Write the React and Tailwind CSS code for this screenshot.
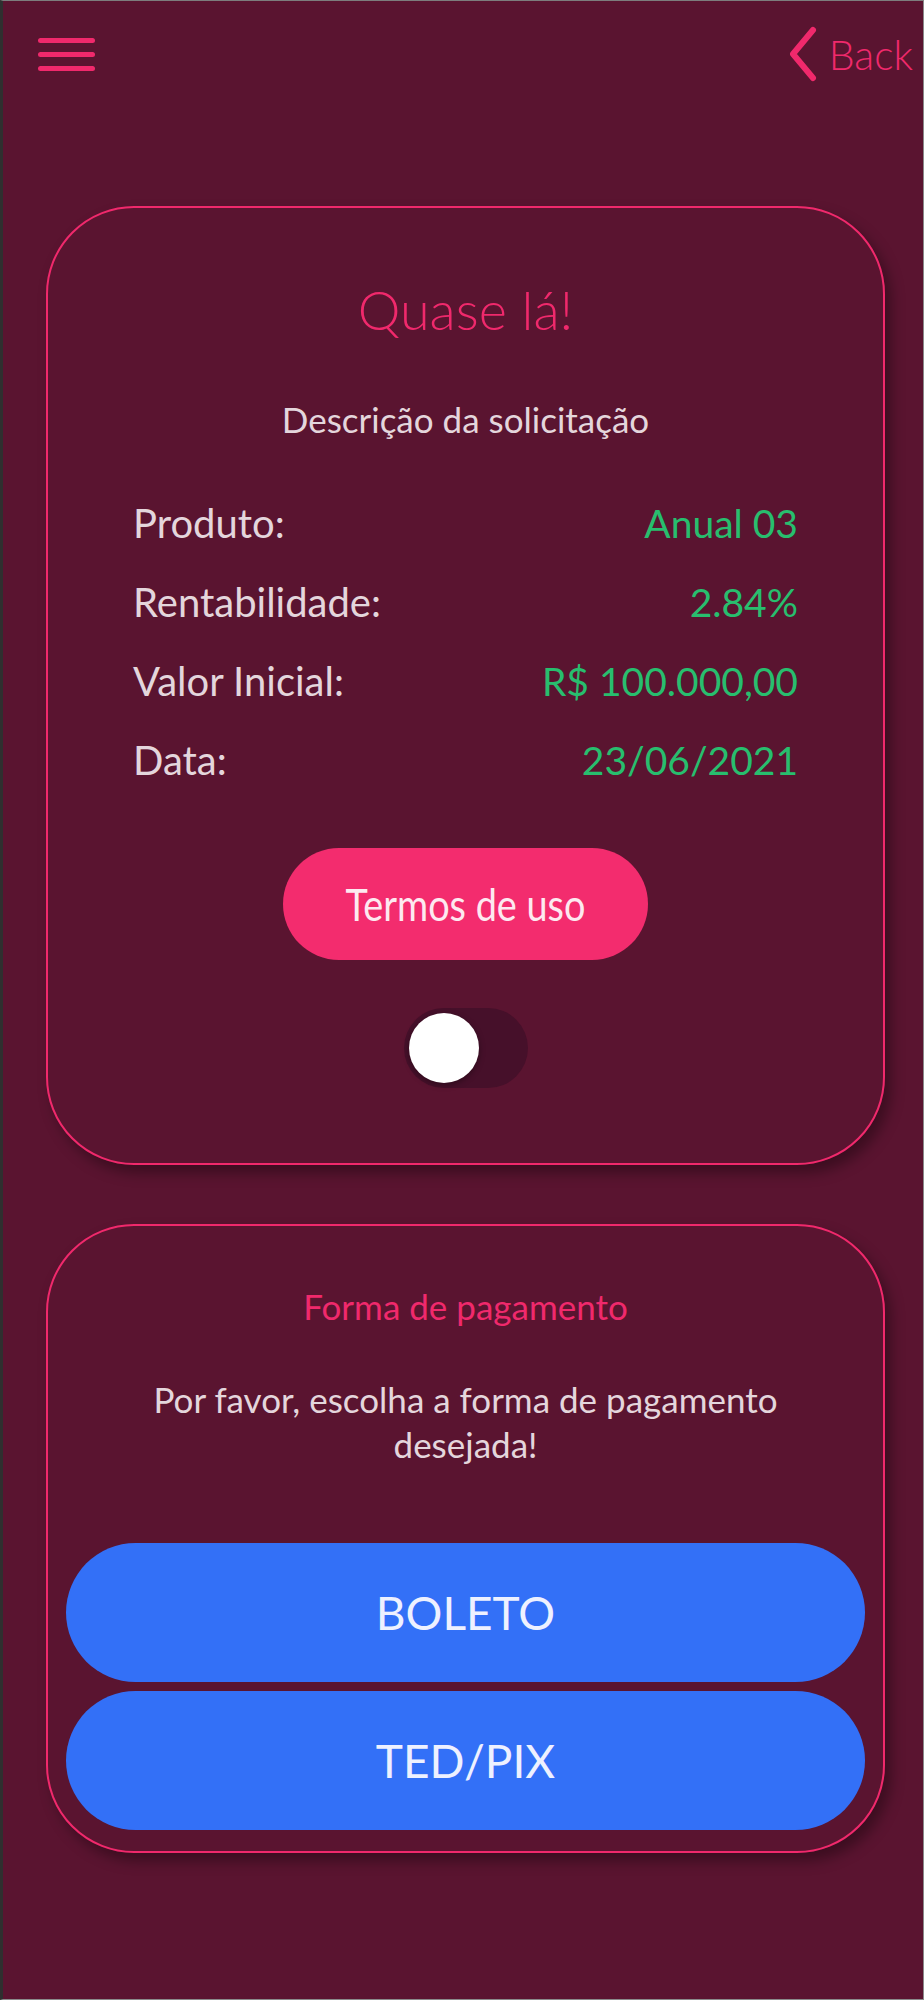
export default function App() {
  const pink = "text-[#f0296c]";
  const rows = [
    ["Produto:", "Anual 03"],
    ["Rentabilidade:", "2.84%"],
    ["Valor Inicial:", "R$ 100.000,00"],
    ["Data:", "23/06/2021"],
  ];
  return (
    <div className="w-[924px] h-[2000px] overflow-hidden bg-[#5a1430] border-l-[3px] border-t border-r border-b border-l-[#2f2f2f] border-t-[#7d7d7d] border-r-[#8a8a8a] border-b-[#8a8a8a] font-['Lato',sans-serif]">
      <header className="flex justify-between items-start pt-[25px] pl-[35px] pr-[10px]">
        <div className="mt-[12px] flex flex-col gap-[9px]">
          <span className="block w-[57px] h-[5px] rounded-full bg-[#f0296c]" />
          <span className="block w-[57px] h-[5px] rounded-full bg-[#f0296c]" />
          <span className="block w-[57px] h-[5px] rounded-full bg-[#f0296c]" />
        </div>
        <div className="flex items-center h-[56px]">
          <svg width="32" height="56" viewBox="0 0 32 56">
            <path d="M27 4 L7 28 L27 52" fill="none" stroke="#f0296c" strokeWidth="6" strokeLinecap="round" strokeLinejoin="round" />
          </svg>
          <span className={`ml-[11px] text-[41px] leading-none font-light ${pink}`}>Back</span>
        </div>
      </header>

      <section className="ml-[43px] mt-[124px] w-[839px] rounded-[88px] border-2 border-[#f0296c] shadow-[6px_8px_14px_rgba(0,0,0,0.35)] pt-[75px] pb-[75px] flex flex-col items-center">
        <h1 className={`text-[54px] leading-none font-light ${pink}`}>Quase lá!</h1>
        <p className="mt-[65px] text-[35px] leading-none text-[#e4d6dc]">Descrição da solicitação</p>
        <div className="mt-[66px] w-full px-[85px] flex flex-col gap-[39px]">
          {rows.map(([k, v]) => (
            <div key={k} className="flex justify-between items-baseline leading-none">
              <span className="text-[40px] text-[#e4d6dc]">{k}</span>
              <span className="text-[39px] text-[#28be6e]">{v}</span>
            </div>
          ))}
        </div>
        <button className="mt-[68px] w-[365px] h-[112px] rounded-full bg-[#f32c6e] flex items-center justify-center">
          <span className="inline-block scale-x-[0.86] text-[44px] leading-none text-[#fde9f0]">Termos de uso</span>
        </button>
        <div className="mt-[48px] w-[124px] h-[80px] rounded-full bg-[#46102a] flex items-center pl-[5px]">
          <span className="block w-[70px] h-[70px] rounded-full bg-white shadow-[0_2px_6px_rgba(0,0,0,0.35)]" />
        </div>
      </section>

      <section className="ml-[43px] mt-[59px] w-[839px] rounded-[88px] border-2 border-[#f0296c] shadow-[6px_8px_14px_rgba(0,0,0,0.35)] pt-[63px] pb-[21px] px-[18px] flex flex-col items-center">
        <h2 className={`text-[35px] leading-none ${pink}`}>Forma de pagamento</h2>
        <p className="mt-[53px] px-[82px] text-center text-[35px] leading-[45px] text-[#e4d6dc]">
          Por favor, escolha a forma de pagamento desejada!
        </p>
        <button className="mt-[76px] w-full h-[139px] rounded-full bg-[#3370f7] text-[46px] leading-none text-[#eef1ff]">
          BOLETO
        </button>
        <button className="mt-[9px] w-full h-[139px] rounded-full bg-[#3370f7] text-[46px] leading-none text-[#eef1ff]">
          TED/PIX
        </button>
      </section>
    </div>
  );
}
